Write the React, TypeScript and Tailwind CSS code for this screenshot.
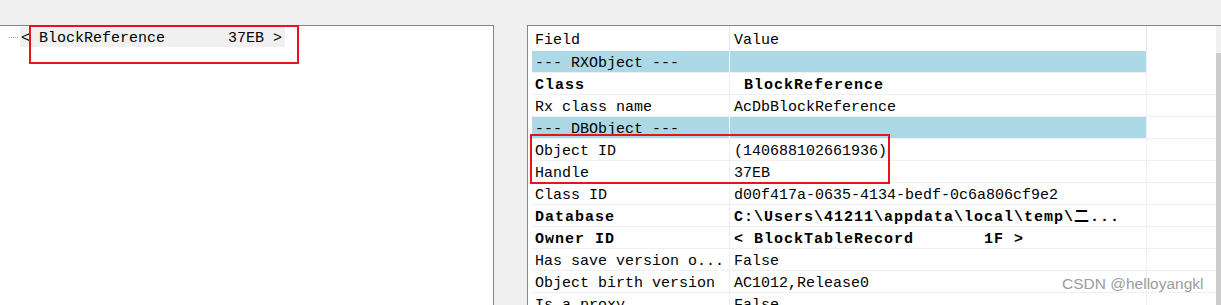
import React from 'react';

type Row = {
  field: string;
  value: React.ReactNode;
  kind?: 'group' | 'bold';
};

const rows: Row[] = [
  { field: '--- RXObject ---', value: '', kind: 'group' },
  { field: 'Class', value: ' BlockReference', kind: 'bold' },
  { field: 'Rx class name', value: 'AcDbBlockReference' },
  { field: '--- DBObject ---', value: '', kind: 'group' },
  { field: 'Object ID', value: '(140688102661936)' },
  { field: 'Handle', value: '37EB' },
  { field: 'Class ID', value: 'd00f417a-0635-4134-bedf-0c6a806cf9e2' },
  { field: 'Database', value: 'C:\\Users\\41211\\appdata\\local\\temp\\二...', kind: 'bold' },
  { field: 'Owner ID', value: '< BlockTableRecord       1F >', kind: 'bold' },
  { field: 'Has save version o...', value: 'False' },
  { field: 'Object birth version', value: 'AC1012,Release0' },
  { field: 'Is a proxy', value: 'False' },
];

const mono = "font-['Liberation_Mono','Noto_Sans_CJK_SC',monospace]";

export default function App() {
  return (
    <div className={`relative w-[1221px] h-[305px] overflow-hidden bg-[#f0f0f0] text-black ${mono} text-[15px]`}>
      <div className="flex h-full pt-[25px]">
        {/* tree panel */}
        <div className="w-[494px] h-full bg-white border-t border-r border-[#828790] pt-[1px]">
          <div className="flex items-center h-[20px] pl-[9px]">
            <span className="w-[9px] border-t border-dotted border-[#a0a0a0] mr-[2px]" />
            <span className="block h-[20px] leading-[24px] overflow-hidden bg-[#f0f0f0] pl-[1px] pr-[3px] whitespace-pre">
              {'< BlockReference       37EB >'}
            </span>
          </div>
        </div>

        <div className="w-[33px]" />

        {/* property grid */}
        <div className="flex-1 h-full bg-white border-t border-l border-[#828790] flex">
          <div className="flex-1 pl-[4px]">
            <div className="flex h-[25px] leading-[29px]">
              <div className="w-[198px] pl-[3px] border-r border-[#e5e5e5]">Field</div>
              <div className="w-[417px] pl-[4px] border-r border-[#e5e5e5]">Value</div>
              <div className="flex-1" />
            </div>
            {rows.map((r) => {
              const group = r.kind === 'group';
              const bold = r.kind === 'bold';
              return (
                <div key={r.field} className="flex h-[22px] leading-[26px]">
                  <div
                    className={`w-[198px] pl-[3px] border-r border-b whitespace-pre overflow-hidden ${
                      group ? 'bg-[#add8e6] border-r-white border-b-[#f0f0f0]' : 'border-[#f0f0f0]'
                    } ${bold ? 'font-bold tracking-[1px]' : ''}`}
                  >
                    {r.field}
                  </div>
                  <div
                    className={`w-[417px] pl-[4px] border-r border-b border-[#f0f0f0] whitespace-pre overflow-hidden ${
                      group ? 'bg-[#add8e6]' : ''
                    } ${bold ? 'font-bold tracking-[1px]' : ''}`}
                  >
                    {r.value}
                  </div>
                  <div className={`flex-1 ${r.field === '--- RXObject ---' ? '' : 'border-b border-[#f0f0f0]'}`} />
                </div>
              );
            })}
          </div>
          {/* scrollbar edge */}
          <div className="w-[5px] h-full flex flex-col">
            <div className="h-[27px] bg-[#f0f0f0]" />
            <div className="flex-1 bg-[#cdcdcd]" />
          </div>
        </div>
      </div>

      {/* annotation boxes */}
      <div className="absolute left-[29px] top-[25px] w-[270px] h-[39px] border-2 border-[#e8141c]" />
      <div className="absolute left-[530px] top-[134px] w-[360px] h-[50px] border-2 border-[#e8141c]" />

      {/* watermark */}
      <div className="absolute left-[1062px] top-[274px] text-[15.5px] text-[#9c9c9c] font-['Liberation_Sans',Arial,sans-serif] leading-[20px]">
        CSDN @helloyangkl
      </div>
    </div>
  );
}
